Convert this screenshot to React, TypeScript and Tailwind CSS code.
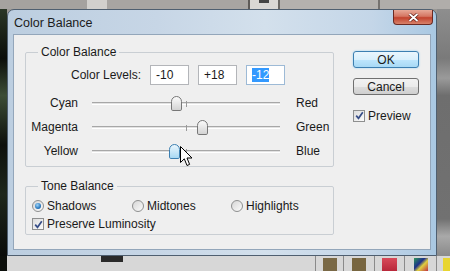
import React from 'react';

const sliders = [
  { left: 'Cyan', right: 'Red', value: -10, hover: false },
  { left: 'Magenta', right: 'Green', value: 18, hover: false },
  { left: 'Yellow', right: 'Blue', value: -12, hover: true },
];

const CheckBox = ({ checked }: { checked: boolean }) => (
  <span className="w-[12px] h-[12px] border border-[#8e8f8f] bg-[linear-gradient(135deg,#dcdcdc,#fbfbfb)] flex items-center justify-center shrink-0">
    {checked && (
      <svg width="9" height="9" viewBox="0 0 9 9">
        <path d="M1.2 4.6 L3.5 7.3 L7.8 1.2" fill="none" stroke="#364d87" strokeWidth="1.7" />
      </svg>
    )}
  </span>
);

const Radio = ({ checked }: { checked: boolean }) => (
  <span className="w-[12px] h-[12px] rounded-full border border-[#8e8f8f] bg-[linear-gradient(135deg,#d6d6d6,#fbfbfb)] flex items-center justify-center shrink-0">
    {checked && (
      <span className="w-[6px] h-[6px] rounded-full bg-[radial-gradient(circle_at_40%_35%,#9fd4f7,#2a79bf_60%,#1b4f86)]" />
    )}
  </span>
);

const SliderRow = ({ left, right, value, hover }: (typeof sliders)[number]) => {
  // track is 188px wide, center at 94, -100..100
  const center = 94 + value * 0.94;
  return (
    <div className="flex items-center h-[24px]">
      <span className="w-[52px] text-right">{left}</span>
      <div className="relative ml-[14px] w-[188px] h-full flex items-center">
        <div className="w-full h-[3px] border-t border-[#a7a7a7] border-b border-b-white bg-[#e2e2e2]" />
        <div className="absolute left-[94px] top-[10px] w-px h-[6px] bg-[#9a9a9a]" />
        <div
          className={
            hover
              ? 'absolute top-[5px] w-[11px] h-[15px] rounded-t-[6px] rounded-b-[2px] border border-[#3c7fb1] bg-[linear-gradient(180deg,#eaf6fd,#a7d8f3)]'
              : 'absolute top-[5px] w-[11px] h-[15px] rounded-t-[6px] rounded-b-[2px] border border-[#777] bg-[linear-gradient(180deg,#fbfbfb,#d3d3d3)]'
          }
          style={{ left: center - 5.5 }}
        />
      </div>
      <span className="ml-[16px]">{right}</span>
    </div>
  );
};

const Window = () => (
  <div className="relative w-[430px] h-[247px] flex flex-col rounded-t-[7px] border border-[#4f5f70] bg-[linear-gradient(90deg,#bccee0_0%,#c7d6e6_35%,#d3e0ec_60%,#c4d6e8_85%,#a9c8e2_100%)]">
    <div className="h-[24px] flex items-start">
      <span className="pl-[6px] pt-[4px] text-[12.5px] text-[#1b1b1b]">Color Balance</span>
      <div className="ml-auto mr-[3px] w-[40px] h-[15px] rounded-b-[4px] border border-t-0 border-[#6b2a22] bg-[linear-gradient(180deg,#e7a998_0%,#d57662_45%,#c2432e_55%,#d8826a_100%)] flex items-center justify-center">
        <svg width="11" height="9" viewBox="0 0 11 9">
          <path d="M1.5 1 L9.5 8 M9.5 1 L1.5 8" stroke="#5a1a12" strokeWidth="3.2" />
          <path d="M1.5 1 L9.5 8 M9.5 1 L1.5 8" stroke="#fff" strokeWidth="1.8" />
        </svg>
      </div>
    </div>

    <div className="mx-[5px] h-[216px] border border-[#93a6ba] bg-[#efefef] flex items-start">
      <div className="ml-[11px] pt-[10px] flex flex-col">
        <fieldset className="w-[309px] h-[122px] border border-[#c9ced3] rounded-[2px]">
          <legend className="ml-[12px] px-[3px] leading-[14px]">Color Balance</legend>
          <div className="mt-[6px] h-[20px] flex items-center">
            <span className="w-[115px] text-right">Color Levels:</span>
            <div className="ml-[9px] flex gap-[9px]">
              <div className="w-[39px] h-[20px] border border-[#b3b5b9] bg-white pl-[5px] flex items-center">-10</div>
              <div className="w-[39px] h-[20px] border border-[#b3b5b9] bg-white pl-[5px] flex items-center">+18</div>
              <div className="w-[39px] h-[20px] border border-[#9dbad6] bg-white pl-[5px] flex items-center">
                <span className="bg-[#3399ff] text-white leading-[14px]">-12</span>
              </div>
            </div>
          </div>
          <div className="mt-[6px] flex flex-col">
            {sliders.map((s) => (
              <SliderRow key={s.left} {...s} />
            ))}
          </div>
        </fieldset>

        <fieldset className="mt-[12px] w-[309px] h-[56px] border border-[#c9ced3] rounded-[2px]">
          <legend className="ml-[12px] px-[3px] leading-[14px]">Tone Balance</legend>
          <div className="mt-[4px] pl-[6px] h-[18px] flex items-center">
            <label className="w-[100px] flex items-center gap-[3px]">
              <Radio checked />
              <span>Shadows</span>
            </label>
            <label className="w-[99px] flex items-center gap-[3px]">
              <Radio checked={false} />
              <span>Midtones</span>
            </label>
            <label className="flex items-center gap-[3px]">
              <Radio checked={false} />
              <span>Highlights</span>
            </label>
          </div>
          <label className="pl-[6px] h-[18px] flex items-center gap-[3px]">
            <CheckBox checked />
            <span>Preserve Luminosity</span>
          </label>
        </fieldset>
      </div>

      <div className="ml-[19px] pt-[16px] flex flex-col">
        <button className="w-[66px] h-[17px] rounded-[3px] border border-[#3c7fb1] bg-[linear-gradient(180deg,#eaf6fd_0%,#d9f0fc_50%,#bee6fd_51%,#a7d9f5_100%)] shadow-[0_0_2px_#8fd0f5] flex items-center justify-center leading-none">
          OK
        </button>
        <button className="mt-[10px] w-[66px] h-[17px] rounded-[3px] border border-[#707070] bg-[linear-gradient(180deg,#f2f2f2_0%,#ebebeb_50%,#dddddd_51%,#cfcfcf_100%)] flex items-center justify-center leading-none">
          Cancel
        </button>
        <label className="mt-[14px] h-[13px] flex items-center gap-[3px]">
          <CheckBox checked />
          <span>Preview</span>
        </label>
      </div>
    </div>
  </div>
);

export default function App() {
  return (
    <div className="relative w-[450px] h-[271px] overflow-hidden flex flex-col bg-[#9a9794] font-['Liberation_Sans',Arial,sans-serif] text-[12px] text-[#1a1a1a]">
      {/* toolbar strip behind the dialog */}
      <div className="h-[9px] flex shrink-0">
        <div className="w-[87px] bg-[#a5a29f]" />
        <div className="w-[20px] bg-[#d2d0cd]" />
        <div className="w-[143px] bg-[#a8a5a2] border-r-2 border-[#5e5b58]" />
        <div className="w-[30px] bg-[#d9d7d4] border-r-2 border-[#6a6764] flex justify-center">
          <div className="w-[10px] h-[3px] bg-[#444]" />
        </div>
        <div className="w-[100px] bg-[#b4b1ae] border-r-2 border-[#75726f]" />
        <div className="flex-1 bg-[#b0adaa]" />
      </div>

      <div className="flex h-[247px]">
        <div className="w-[7px] bg-[linear-gradient(180deg,#2a3626_0%,#0b0e0a_20%,#3c4d35_35%,#0d100c_55%,#1e271b_75%,#0a0c0a_100%)]" />
        <Window />
        <div className="w-[13px] bg-[linear-gradient(180deg,#8e8e8e_0%,#7a7a7a_20%,#9a9a9a_28%,#6e6e6e_35%,#717171_85%,#a9a9a9_92%,#8a8a8a_100%)]" />
      </div>

      {/* panel strip below */}
      <div className="h-[15px] flex bg-[#d7d7d7]">
        <div className="w-[7px] bg-[#0c0f0b]" />
        <div className="w-[94px]" />
        <div className="w-[22px] h-[6px] bg-[#2a2a2a]" />
        <div className="w-[193px] border-r border-[#8a8a8a]" />
        <div className="w-[28px] border-r border-[#8a8a8a] flex justify-center pt-[2px]">
          <div className="w-[14px] h-[13px] bg-[#7a6946]" />
        </div>
        <div className="w-[31px] border-r border-[#8a8a8a] flex justify-center pt-[2px]">
          <div className="w-[14px] h-[13px] bg-[#786640]" />
        </div>
        <div className="w-[30px] border-r border-[#8a8a8a] flex justify-center pt-[2px]">
          <div className="w-[15px] h-[13px] bg-[linear-gradient(180deg,#d84a5a,#b8283a)]" />
        </div>
        <div className="w-[32px] border-r border-[#8a8a8a] flex justify-center pt-[2px]">
          <div className="w-[14px] h-[13px] bg-[linear-gradient(135deg,#2f9a5a_0%,#1d2f8a_40%,#e0d040_60%,#c03040_100%)]" />
        </div>
        <div className="flex-1 flex justify-end pt-[2px]">
          <div className="w-[7px] h-[13px] bg-[#e8d530]" />
        </div>
      </div>

      {/* mouse pointer */}
      <svg className="absolute left-[180px] top-[146px]" width="13" height="21" viewBox="0 0 13 21">
        <path d="M0.5 0.5 L0.5 16.5 L4.3 12.8 L7 19.5 L9.6 18.4 L7 12 L12 12 Z" fill="#fff" stroke="#000" strokeWidth="1" />
      </svg>
    </div>
  );
}
